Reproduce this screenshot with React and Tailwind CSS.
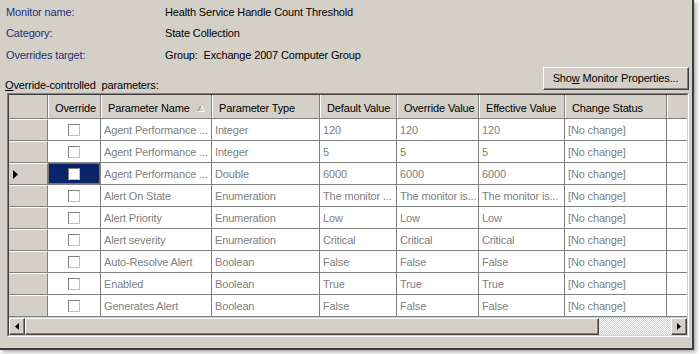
import React from "react";

const rows = [
  ["Agent Performance ...", "Integer", "120", "120", "120"],
  ["Agent Performance ...", "Integer", "5", "5", "5"],
  ["Agent Performance ...", "Double", "6000", "6000", "6000"],
  ["Alert On State", "Enumeration", "The monitor ...", "The monitor is...", "The monitor is..."],
  ["Alert Priority", "Enumeration", "Low", "Low", "Low"],
  ["Alert severity", "Enumeration", "Critical", "Critical", "Critical"],
  ["Auto-Resolve Alert", "Boolean", "False", "False", "False"],
  ["Enabled", "Boolean", "True", "True", "True"],
  ["Generates Alert", "Boolean", "False", "False", "False"],
];

function Checkbox() {
  return (
    <div className="w-[12px] h-[12px] bg-white border border-t-[#808080] border-l-[#808080] border-r-[#c0c0c0] border-b-[#c0c0c0]" />
  );
}

function HeaderCell({ w, children, sort }) {
  return (
    <div className={`${w} h-full shrink-0 flex items-center pl-[6px] pt-[3px] border-r border-r-[#808080] border-l border-l-white text-black whitespace-nowrap overflow-hidden relative`}>
      {children}
      {sort && (
        <svg className="absolute right-[6px] top-[10px]" width="8" height="7" viewBox="0 0 8 7">
          <path d="M0.5 6.5 L4 0.5" stroke="#808080" fill="none" />
          <path d="M4 0.5 L7.5 6.5 L0.5 6.5" stroke="#ffffff" fill="none" />
        </svg>
      )}
    </div>
  );
}

function Cell({ w, children }) {
  return (
    <div className={`${w} h-full shrink-0 flex items-center pl-[3px] pt-[1px] border-r border-[#808080] text-[#808080] whitespace-nowrap overflow-hidden`}>
      {children}
    </div>
  );
}

function Raised({ className, children }) {
  return (
    <div className={`border border-t-white border-l-white border-r-[#404040] border-b-[#404040] ${className}`}>
      <div className="w-full h-full border-r border-b border-[#808080] flex items-center justify-center">
        {children}
      </div>
    </div>
  );
}

export default function App() {
  return (
    <div className="w-[700px] h-[354px] bg-white overflow-hidden font-['Liberation_Sans',Arial,sans-serif] text-[11px] tracking-[-0.15px]">
      <div className="w-[694px] h-[350px] bg-[#d4d0c8] border-r-2 border-b-2 border-[#3c3c3c] shadow-[2px_2px_4px_rgba(0,0,0,0.35)] flex flex-col pt-[2px] pr-[3px]">
        <div className="flex h-[21px] items-center pl-[6px]">
          <div className="w-[159px] text-[#1e3278]">Monitor name:</div>
          <div className="text-black">Health Service Handle Count Threshold</div>
        </div>
        <div className="flex h-[21px] items-center pl-[6px]">
          <div className="w-[159px] text-[#1e3278]">Category:</div>
          <div className="text-black">State Collection</div>
        </div>
        <div className="flex h-[22px] items-center pl-[6px]">
          <div className="w-[159px] text-[#1e3278]">Overrides target:</div>
          <div className="text-black">Group:&nbsp; Exchange 2007 Computer Group</div>
        </div>
        <div className="flex h-[24px] items-end justify-between pl-[5px]">
          <div className="text-black mb-[-3px]">
            <span className="underline">O</span>verride-controlled&nbsp; parameters:
          </div>
          <Raised className="w-[146px] h-[23px] text-black">
            <span>
              Sho<span className="underline">w</span> Monitor Properties...
            </span>
          </Raised>
        </div>
        <div className="ml-[7px] mt-[3px] w-[682px] h-[244px] border border-t-[#808080] border-l-[#808080] border-r-white border-b-white">
          <div className="w-full h-full border border-t-[#404040] border-l-[#404040] border-r-[#d4d0c8] border-b-[#d4d0c8] flex flex-col">
            <div className="flex h-[24px] shrink-0 bg-[#d4d0c8] border-b border-[#808080]">
              <div className="w-[39px] h-full shrink-0 border-r border-[#808080]" />
              <HeaderCell w="w-[53px]">Override</HeaderCell>
              <HeaderCell w="w-[111px]" sort>Parameter Name</HeaderCell>
              <HeaderCell w="w-[108px]">Parameter Type</HeaderCell>
              <HeaderCell w="w-[77px]">Default Value</HeaderCell>
              <HeaderCell w="w-[82px]">Override Value</HeaderCell>
              <HeaderCell w="w-[86px]">Effective Value</HeaderCell>
              <HeaderCell w="w-[102px]">Change Status</HeaderCell>
              <div className="flex-1 h-full border-l border-white" />
            </div>
            {rows.map((r, i) => (
              <div key={i} className="flex h-[22px] shrink-0 bg-white border-b border-[#808080]">
                <div className="w-[39px] h-full shrink-0 bg-[#d4d0c8] border-r border-[#808080] border-t border-t-white flex items-center pl-[4px]">
                  {i === 2 && (
                    <svg width="5" height="9" viewBox="0 0 5 9">
                      <path d="M0 0 L5 4.5 L0 9 Z" fill="#000" />
                    </svg>
                  )}
                </div>
                {i === 2 ? (
                  <div className="w-[53px] h-full shrink-0 border-r border-[#808080] flex items-center justify-center">
                    <div className="w-[52px] h-[21px] bg-[#0a246a] border border-[#7a7660] flex items-center justify-center">
                      <Checkbox />
                    </div>
                  </div>
                ) : (
                  <div className="w-[53px] h-full shrink-0 border-r border-[#808080] flex items-center justify-center">
                    <Checkbox />
                  </div>
                )}
                <Cell w="w-[111px]">{r[0]}</Cell>
                <Cell w="w-[108px]">{r[1]}</Cell>
                <Cell w="w-[77px]">{r[2]}</Cell>
                <Cell w="w-[82px]">{r[3]}</Cell>
                <Cell w="w-[86px]">{r[4]}</Cell>
                <Cell w="w-[102px]">[No change]</Cell>
                <div className="flex-1 h-full" />
              </div>
            ))}
            <div className="flex-1" />
            <div className="flex h-[17px] shrink-0">
              <Raised className="w-[16px] h-full bg-[#d4d0c8]">
                <svg width="4" height="7" viewBox="0 0 4 7">
                  <path d="M4 0 L0 3.5 L4 7 Z" fill="#000" />
                </svg>
              </Raised>
              <Raised className="w-[574px] h-full bg-[#d4d0c8]" />
              <div className="flex-1 h-full bg-[repeating-conic-gradient(#ffffff_0_25%,#d4d0c8_0_50%)] bg-[length:2px_2px]" />
              <Raised className="w-[16px] h-full bg-[#d4d0c8]">
                <svg width="4" height="7" viewBox="0 0 4 7">
                  <path d="M0 0 L4 3.5 L0 7 Z" fill="#000" />
                </svg>
              </Raised>
            </div>
          </div>
        </div>
      </div>
    </div>
  );
}
